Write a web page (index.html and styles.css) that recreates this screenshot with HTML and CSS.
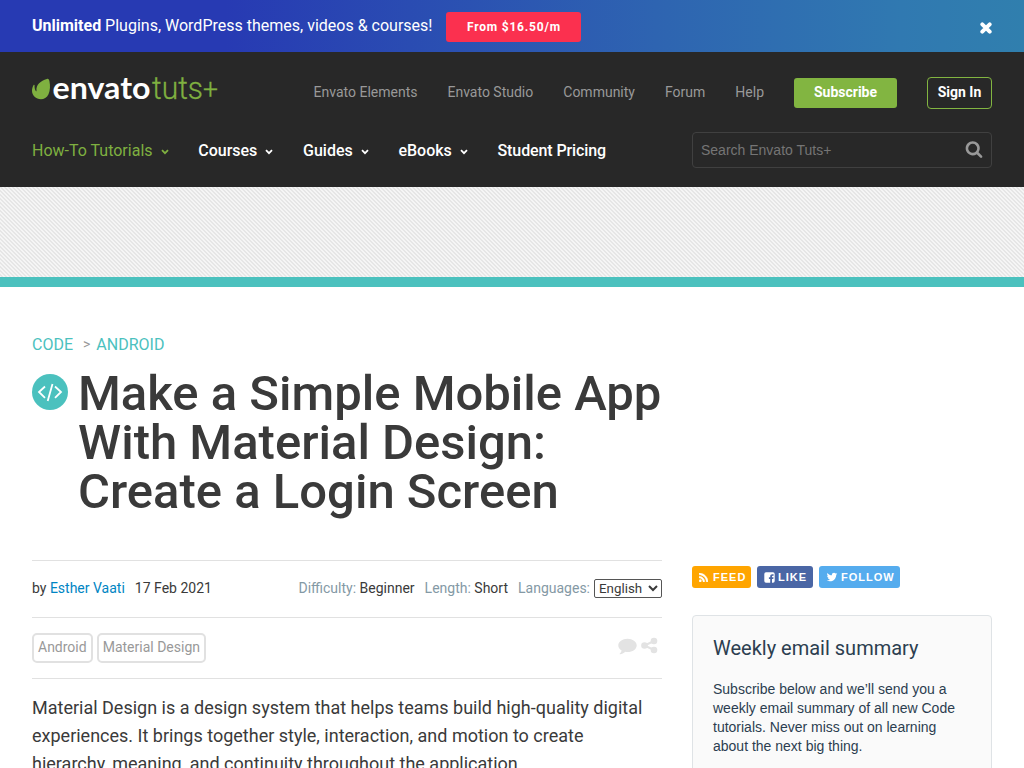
FILE: index.html
```html
<!DOCTYPE html>
<html lang="en">
<head>
<meta charset="utf-8">
<title>Make a Simple Mobile App With Material Design: Create a Login Screen</title>
<link rel="stylesheet" href="styles.css">
</head>
<body>
<div class="promo">
  <p class="promo-text"><b>Unlimited</b> Plugins, WordPress themes, videos &amp; courses!</p>
  <a class="promo-button">From $16.50/m</a>
  <svg class="promo-close" width="12" height="12" viewBox="0 0 12 12"><path d="M2.300 2.300l7.400 7.400M9.700 2.300L2.300 9.700" stroke="#fff" stroke-width="3.900" stroke-linecap="round"/></svg>
</div>
<header class="header">
  <div class="header-top">
    <svg class="logo" width="186" height="26" viewBox="0 0 186 26">
      <path fill="#7fb040" d="M14.800 2C16 1.500 17 2.300 17.400 4c1 4.400.8 9.500-.9 13.200-1.500 3.500-4.600 5-7.600 5C4 22.200 0 18.500 0 13.800c0-2.300.7-4.300 1.600-5.900.4-.5 1-.2 1 .4-.2 2 .2 4.100 1.200 5.700.4.500.8.300.7-.3C3.900 7.500 8.700 4 14.800 2z"/>
      <text class="logo-name" x="20.500" y="22" textLength="98" lengthAdjust="spacingAndGlyphs">envato</text>
      <text class="logo-tuts" x="120" y="22" textLength="51" lengthAdjust="spacingAndGlyphs">tuts</text>
      <text class="logo-plus" x="171" y="22" textLength="15" lengthAdjust="spacingAndGlyphs">+</text>
    </svg>
    <nav class="links"><a>Envato Elements</a><a>Envato Studio</a><a>Community</a><a>Forum</a><a>Help</a></nav>
    <a class="subscribe">Subscribe</a>
    <a class="signin">Sign In</a>
  </div>
  <div class="header-bottom">
    <nav class="menu">
      <a class="active">How-To Tutorials<svg class="caret" width="8" height="6" viewBox="0 0 8 6"><path d="M1 1.200l3 3 3-3"/></svg></a>
      <a>Courses<svg class="caret" width="8" height="6" viewBox="0 0 8 6"><path d="M1 1.200l3 3 3-3"/></svg></a>
      <a>Guides<svg class="caret" width="8" height="6" viewBox="0 0 8 6"><path d="M1 1.200l3 3 3-3"/></svg></a>
      <a>eBooks<svg class="caret" width="8" height="6" viewBox="0 0 8 6"><path d="M1 1.200l3 3 3-3"/></svg></a>
      <a class="pricing">Student Pricing</a>
    </nav>
    <div class="search">
      <span>Search Envato Tuts+</span>
      <svg width="18" height="18" viewBox="0 0 1792 1792"><path fill="#999" d="M1216 832q0-185-131.500-316.500t-316.500-131.500-316.500 131.500-131.500 316.500 131.500 316.500 316.500 131.500 316.500-131.500 131.500-316.500zm512 832q0 52-38 90t-90 38q-54 0-90-38l-343-342q-179 124-399 124-143 0-273.500-55.500t-225-150-150-225-55.500-273.500 55.500-273.500 150-225 225-150 273.500-55.500 273.500 55.500 225 150 150 225 55.500 273.500q0 220-124 399l343 343q37 37 37 90z"/></svg>
    </div>
  </div>
</header>
<div class="banner"></div>
<main class="page">
  <div class="crumbs"><a>CODE</a><span>&gt;</span><a>ANDROID</a></div>
  <div class="heading">
    <svg class="code-icon" width="36" height="36" viewBox="0 0 36 36"><circle cx="18" cy="18" r="18" fill="#4bc1be"/><path d="M13 12.500L7 18l6 5.800M23 12.500l6 5.500-6 5.800M20.500 10l-4.800 17" fill="none" stroke="#fff" stroke-width="1.800"/></svg>
    <h1>Make a Simple Mobile App<br>With Material Design:<br>Create a Login Screen</h1>
  </div>
  <div class="columns">
    <article class="article">
      <div class="meta">
        <span class="by">by <a>Esther Vaati</a></span><time>17 Feb 2021</time>
        <div class="details"><span><i>Difficulty:</i> Beginner</span><span><i>Length:</i> Short</span><span><i>Languages:</i></span><select><option>English</option></select></div>
      </div>
      <div class="tags">
        <a>Android</a><a>Material Design</a>
        <svg class="actions" width="42" height="18" viewBox="0 0 42 18"><g fill="#e3e3e3"><path d="M9.500 1.800c5.100 0 9.200 3 9.200 6.600s-4.100 6.600-9.200 6.600c-.8 0-1.500-.1-2.200-.2-1.700 1.500-3.400 2.300-5.200 2.400-.6 0-.6-.4-.2-.8 1-.9 1.500-1.800 1.700-3C1.500 12.200.3 10.400.3 8.400c0-3.600 4.100-6.600 9.200-6.600z"/><circle cx="26.500" cy="8.500" r="3.300"/><circle cx="36" cy="4" r="3.300"/><circle cx="36" cy="13" r="3.300"/></g><path d="M36 4l-9.500 4.500L36 13" fill="none" stroke="#e3e3e3" stroke-width="2"/></svg>
      </div>
      <p class="intro">Material Design is a design system that helps teams build high-quality digital experiences. It brings together style, interaction, and motion to create hierarchy, meaning, and continuity throughout the application.</p>
    </article>
    <aside class="side">
      <div class="social">
        <a class="feed"><svg width="9" height="9" viewBox="192 128 1408 1408"><path fill="#fff" stroke="#fff" stroke-width="60" d="M576 1344q0 80-56 136t-136 56-136-56-56-136 56-136 136-56 136 56 56 136zm512 123q2 28-17 48-18 21-47 21h-135q-25 0-43-16.500t-20-41.500q-22-229-184.500-391.500t-391.500-184.500q-25-2-41.500-20t-16.500-43v-135q0-29 21-47 17-17 43-17h5q160 13 306 80.500t259 181.500q114 113 181.500 259t80.500 306zm512 2q2 27-18 47-18 20-46 20h-143q-26 0-44.500-17.500t-19.500-42.500q-12-215-101-408.500t-231.500-336-336-231.500-408.500-102q-25-1-42.500-19.500t-17.500-43.500v-143q0-28 20-46 18-18 44-18h3q262 13 501.500 120t425.500 294q187 186 294 425.500t120 501.500z"/></svg>FEED</a>
        <a class="like"><svg width="11" height="11" viewBox="0 0 11 11"><path fill="#fff" d="M2 .3h7A1.700 1.700 0 0 1 10.700 2v7A1.700 1.700 0 0 1 9 10.700H8V6.900h1.300L9.500 5.300H8V4.400c0-.5.200-.7.700-.7h.9V2.200H8.300C6.900 2.200 6.200 3 6.200 4.200v1.100H4.900v1.600h1.300v3.800H2A1.700 1.700 0 0 1 .3 9V2A1.700 1.700 0 0 1 2 .3z"/></svg>LIKE</a>
        <a class="follow"><svg width="12" height="12" viewBox="0 0 1792 1792"><path fill="#fff" d="M1684 408q-67 98-162 167 1 14 1 42 0 130-38 259.500t-115.500 248.500-184.500 210.500-258 146-323 54.500q-271 0-496-145 35 4 78 4 225 0 401-138-105-2-188-64.500t-114-159.500q33 5 61 5 43 0 85-11-112-23-185.500-111.500t-73.500-205.500v-4q68 38 146 41-66-44-105-115t-39-154q0-88 44-163 121 149 294.500 238.500t371.500 99.500q-8-38-8-74 0-134 94.500-228.500t228.500-94.500q140 0 236 102 109-21 205-78-37 115-142 178 93-10 186-50z"/></svg>FOLLOW</a>
      </div>
      <section class="card">
        <h2>Weekly email summary</h2>
        <p>Subscribe below and we’ll send you a weekly email summary of all new Code tutorials. Never miss out on learning about the next big thing.</p>
      </section>
    </aside>
  </div>
</main>
</body>
</html>
```

FILE: styles.css
```css
* { box-sizing: border-box; }
html { height: 100%; overflow: hidden; }
body { margin: 0; height: 768px; overflow: hidden; background: #fff; color: #3a3a3a; font-family: Roboto, sans-serif; font-size: 14px; }
p, h1, h2 { margin: 0; }
.promo { display: flex; align-items: center; height: 52px; padding: 0 32px; background: linear-gradient(90deg, #273ab3 0%, #273ab3 22%, #2e64b1 64%, #3079b1 88%, #307fae 100%); color: #fff; }
.promo-text { margin-bottom: 2px; font-size: 16px; }
.promo-text b { font-weight: 700; }
.promo-button { margin-left: 14px; width: 135px; height: 30px; line-height: 30px; text-align: center; border-radius: 3px; background: #fb304f; font-size: 12px; font-weight: 700; letter-spacing: .8px; margin-top: 1px; }
.promo-close { margin: 4px 0 0 auto; }
.header { height: 135px; padding: 24px 32px 0; background: #282828; }
.header-top { display: flex; align-items: center; height: 34px; }
.logo { display: block; margin-top: -6px; overflow: visible; }
.logo-name { font: 700 30px Lato, sans-serif; fill: #fff; }
.logo-tuts { font: 300 31px Roboto, sans-serif; fill: #7fb040; stroke: #7fb040; stroke-width: .3px; }
.logo-plus { font: 300 27px Roboto, sans-serif; fill: #7fb040; stroke: #7fb040; stroke-width: .3px; }
.links { display: flex; gap: 30px; margin: -2px 0 0 auto; color: #999; }
.subscribe { margin-left: 30px; width: 103px; height: 30px; line-height: 29px; text-align: center; border-radius: 3px; background: #82b541; color: #fff; font-weight: 700; }
.signin { margin-left: 30px; width: 65px; height: 32px; line-height: 29px; text-align: center; border: 1px solid #82b541; border-radius: 4px; color: #fff; font-weight: 700; }
.header-bottom { display: flex; align-items: center; justify-content: space-between; height: 36px; margin-top: 22px; }
.menu { display: flex; gap: 29.700px; font-size: 16px; font-weight: 500; color: #fff; }
.menu .active { color: #7fb040; font-weight: 400; }
.menu .pricing { letter-spacing: -.1px; }
.caret { margin-left: 8px; vertical-align: 1px; fill: none; stroke: currentColor; stroke-width: 1.800; }
.search { display: flex; align-items: center; justify-content: space-between; width: 300px; height: 36px; padding: 0 8px; border: 1px solid #404040; border-radius: 4px; color: #757575; font: 14px "Liberation Sans", Arial, sans-serif; }
.search svg { margin-bottom: 2px; }
.banner { height: 100px; border-bottom: 10px solid #4bc1be; background: linear-gradient(45deg, #e6e6e6 12.500%, #f5f5f5 12.500% 37.500%, #e6e6e6 37.500% 62.500%, #f5f5f5 62.500% 87.500%, #e6e6e6 87.500%) 0 0 / 4px 4px; }
.page { padding: 48px 32px 0; }
.crumbs { display: flex; font-size: 16px; line-height: 19px; color: #4bc1be; }
.crumbs span { margin: 0 6px 0 10px; font-size: 14px; color: #999; }
.heading { display: flex; gap: 10px; margin-top: 15px; }
.code-icon { flex: none; margin-top: 5px; }
h1 { font-size: 49px; font-weight: 500; line-height: 49px; color: #3a3a3a; white-space: nowrap; }
.columns { display: flex; gap: 30px; margin-top: 44px; }
.article { width: 630px; }
.meta { display: flex; align-items: center; height: 57px; padding-bottom: 2px; border-top: 1px solid #e1e1e1; }
.meta a { color: #0085c3; }
.meta time { margin-left: 10px; }
.details { display: flex; align-items: center; margin-left: auto; }
.details span { margin-right: 10px; }
.details span:last-of-type { margin-right: 4px; }
.details i { font-style: normal; color: #8499a5; }
select { width: 68px; height: 19px; padding: 0; font-family: Roboto, sans-serif; font-size: 13.333px; color: #3a3a3a; background: #fff; border: 1px solid #555; border-radius: 2px; }
.tags { display: flex; align-items: center; gap: 4px; height: 62px; border: solid #e1e1e1; border-width: 1px 0; }
.tags a { height: 30px; padding: 0 4px; line-height: 25px; border: 2px solid #e1e1e1; border-radius: 5px; color: #999; }
.actions { margin: -4px 2px 0 auto; }
.intro { margin-top: 15px; font-size: 18px; line-height: 28px; }
.side { width: 300px; }
.social { display: flex; gap: 6px; margin-top: 6px; color: #fff; font: 700 11px "Liberation Sans", Arial, sans-serif; letter-spacing: 1px; }
.social a { display: flex; align-items: center; gap: 5px; height: 22px; border-radius: 3px; padding-left: 7px; }
.feed { width: 59px; background: #ffa500; }
.like { width: 56px; background: #4a66a5; }
.follow { width: 81px; background: #55acee; }
.social .like, .social .follow { gap: 3px; }
.card { margin-top: 27px; height: 300px; padding: 20px; border: 1px solid #dfe3e6; border-radius: 4px; background: #fafafa; color: #2c3e50; }
.card h2 { font-size: 20px; font-weight: 400; line-height: 24px; }
.card p { margin-top: 20px; font: 14px/19px "Liberation Sans", Arial, sans-serif; }
```
